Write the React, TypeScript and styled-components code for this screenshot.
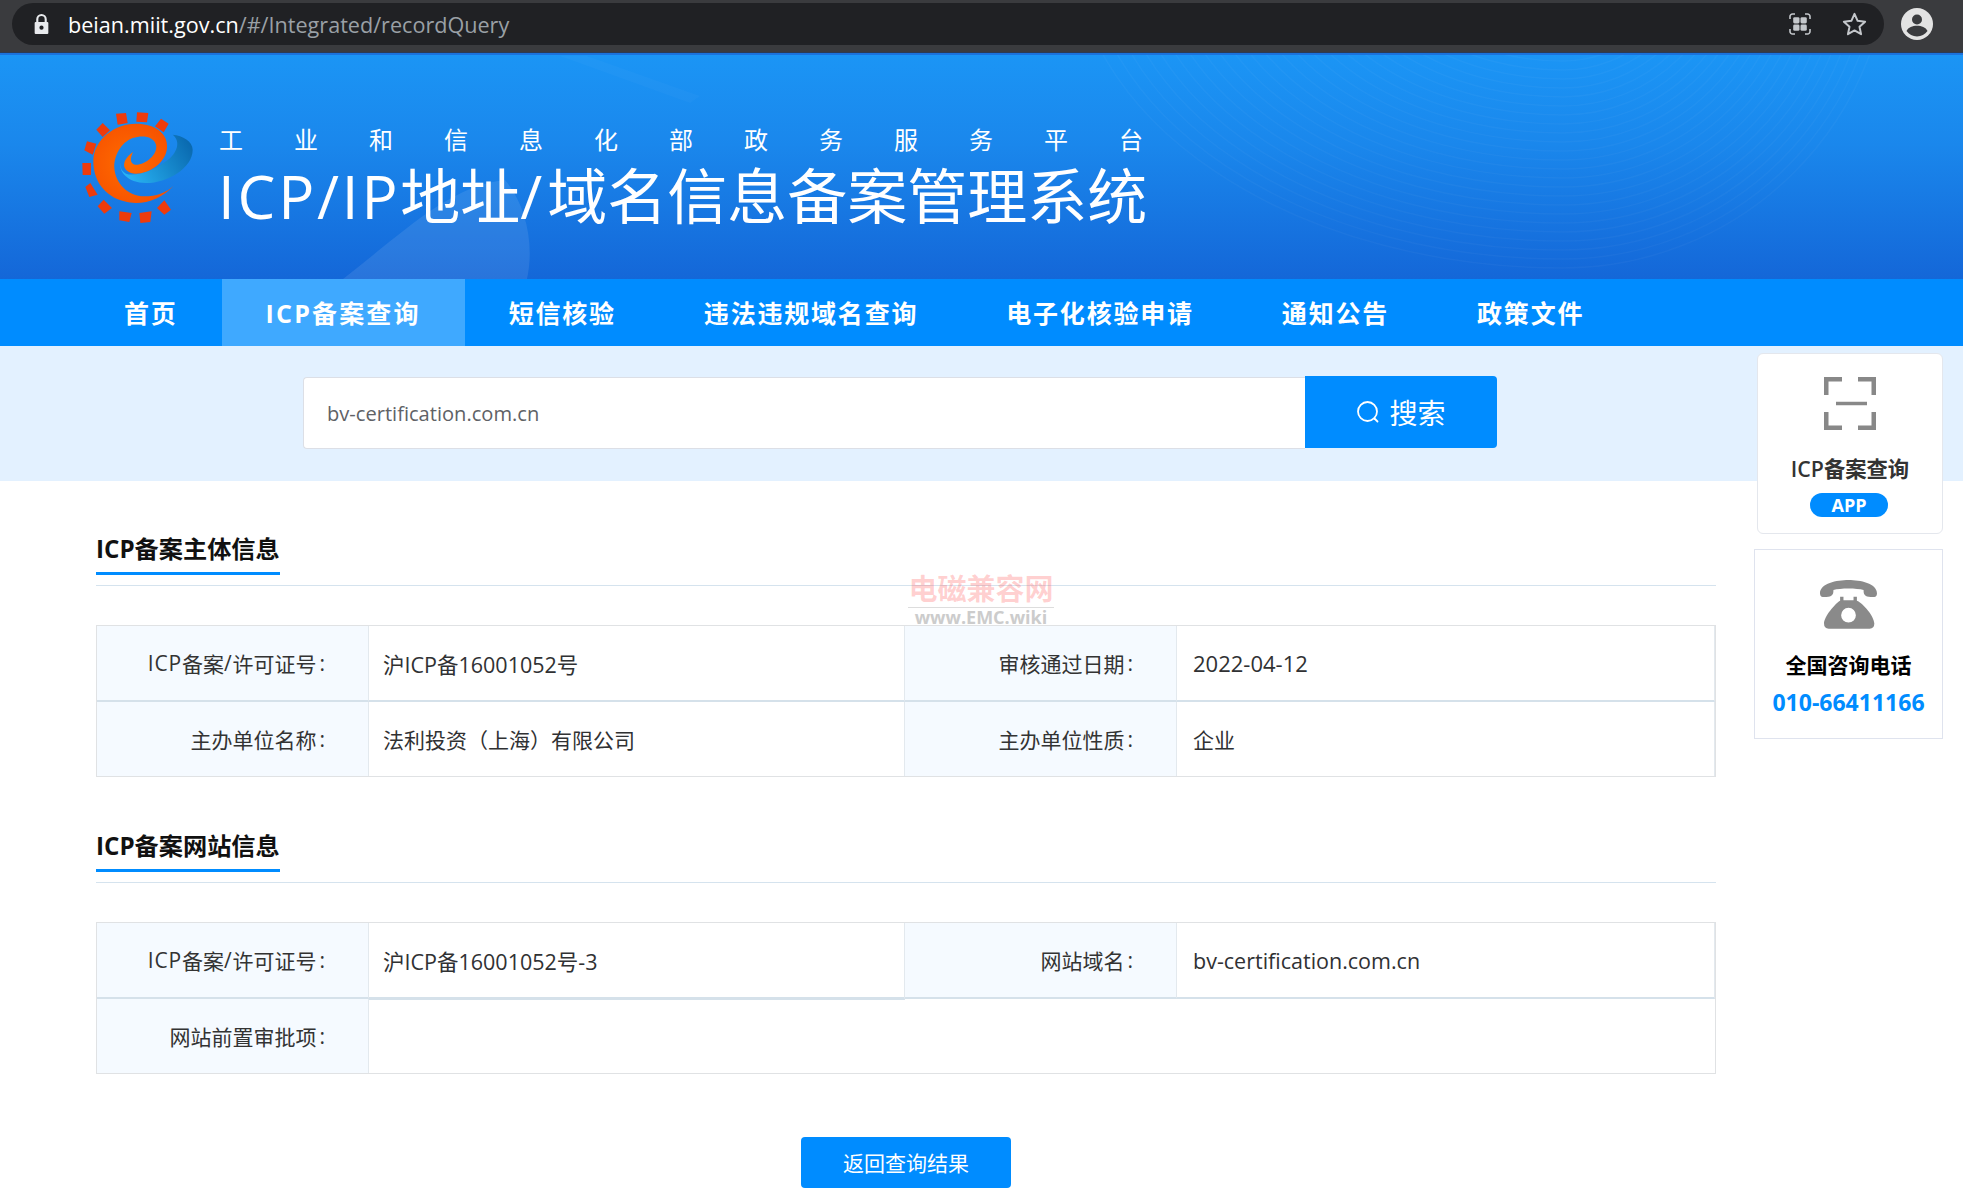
import React from 'react'
import styled, { createGlobalStyle } from 'styled-components'

const GlobalStyle = createGlobalStyle`
  html, body {
    margin: 0;
    padding: 0;
    background: #fff;
  }
  body {
    font-family: "Open Sans", "Noto Sans CJK SC", sans-serif;
    color: #333;
    overflow: hidden;
  }
`

const Page = styled.div`
  position: relative;
  width: 1963px;
  height: 1198px;
  overflow: hidden;
`

/* browser chrome */
const BrowserBar = styled.div`
  height: 53px;
  box-sizing: border-box;
  background: #3a3b3e;
  border-bottom: 1px solid #2b3b55;
  padding: 3px 0 0 12px;
  display: flex;
  align-items: flex-start;
`

const Omnibox = styled.div`
  width: 1872px;
  height: 42px;
  border-radius: 21px;
  background: #202124;
  display: flex;
  align-items: center;
  padding: 0 17px 0 22px;
  box-sizing: border-box;
`

const UrlText = styled.div`
  flex: 1;
  margin-left: 19px;
  font-size: 21.6px;
  color: #fff;
  white-space: nowrap;
  span { color: #9aa0a6; }
`

const BarIcons = styled.div`
  display: flex;
  align-items: center;
  gap: 31px;
`

const Avatar = styled.svg`
  margin: 5px 0 0 17px;
  flex: none;
`

/* banner */
const Banner = styled.header`
  position: relative;
  height: 226px;
  box-sizing: border-box;
  border-top: 2px solid #1b72dc;
  padding: 56px 0 0 81px;
  background: linear-gradient(180deg, #1b95f5 0%, #1a87ec 40%, #1467d8 100%);
  display: flex;
  align-items: flex-start;
  overflow: hidden;
`

const BannerArt = styled.svg`
  position: absolute;
  left: 0;
  top: -2px;
`

const Logo = styled.svg`
  position: relative;
  flex: none;
`

const TitleBlock = styled.div`
  position: relative;
  margin-left: 25px;
  color: #fff;
`

const Subtitle = styled.div`
  display: flex;
  gap: 51px;
  font-size: 24px;
  line-height: 34px;
  margin: 12px 0 0 1px;
`

const Title = styled.h1`
  margin: 3px 0 0;
  font-size: 60px;
  font-weight: 400;
  line-height: 72px;
  white-space: nowrap;
`

/* Latin runs in the reference font sit wider than in Open Sans */
const Wide = styled.span<{ $gap: number }>`
  letter-spacing: ${({ $gap }) => $gap}px;
`

/* nav */
const Nav = styled.nav`
  height: 67px;
  background: #008cff;
  padding-left: 80px;
  display: flex;
`

const NavItem = styled.a<{ $active?: boolean }>`
  padding: 0 44px 2px;
  display: flex;
  align-items: center;
  color: #fff;
  font-size: 25px;
  font-weight: 700;
  letter-spacing: ${({ $active }) => ($active ? '2.16px' : '1.8px')};
  white-space: nowrap;
  background: ${({ $active }) => ($active ? '#3fa9ff' : 'transparent')};
`

/* search */
const SearchBand = styled.div`
  height: 135px;
  box-sizing: border-box;
  background: #e3f1ff;
  padding: 30px 0 0 303px;
  display: flex;
  align-items: flex-start;
`

const SearchInput = styled.div`
  width: 1002px;
  height: 72px;
  margin-top: 1px;
  box-sizing: border-box;
  background: #fff;
  border: 1px solid #dcdfe6;
  border-right: 0;
  border-radius: 4px 0 0 4px;
  padding: 1px 0 0 23px;
  display: flex;
  align-items: center;
  font-size: 20.1px;
  color: #606266;
`

const SearchButton = styled.button`
  width: 192px;
  height: 72px;
  border: 0;
  border-radius: 0 4px 4px 0;
  background: #008cff;
  color: #fff;
  font-family: inherit;
  font-size: 28px;
  display: flex;
  align-items: center;
  justify-content: center;
  gap: 9px;
  padding: 0;
`

/* content */
const Content = styled.main`
  padding: 51px 0 0 96px;
  width: 1620px;
`

const Section = styled.section`
  margin-bottom: 52px;
`

const SectionHead = styled.div`
  border-bottom: 1px solid #d5e3ee;
  padding-bottom: 10px;
  margin-bottom: 39px;
`

const SectionTitle = styled.h2`
  display: inline-block;
  margin: 0;
  vertical-align: top;
  font-size: 24.2px;
  line-height: 32px;
  font-weight: 700;
  color: #111;
  padding: 1px 0 7px;
  border-bottom: 3px solid #008cff;
`

const InfoTable = styled.div`
  display: grid;
  grid-template-columns: 272px 536px 272px 1fr;
  grid-template-rows: 76px 74px;
  box-sizing: border-box;
  border: 1px solid #e0e2e4;
`

const LabelCell = styled.div<{ $last?: boolean }>`
  background: #f5faff;
  border-right: 1px solid #e3e9ee;
  border-bottom: ${({ $last }) => ($last ? '0' : '2px solid #d5e1ea')};
  padding-right: 43px;
  display: flex;
  align-items: center;
  justify-content: flex-end;
  font-size: 21px;
  color: #333;
`

const Colon = styled.span`
  margin-left: 3px;
`

const ValueCell = styled.div<{ $last?: boolean; $span?: number; $size?: number; $thick?: boolean }>`
  grid-column: span ${({ $span }) => $span ?? 1};
  border-right: ${({ $span }) => ($span ? '0' : '1px solid #e3e9ee')};
  border-bottom: ${({ $last, $thick }) => ($last ? '0' : `${$thick ? 3 : 2}px solid #d5e1ea`)};
  margin-bottom: ${({ $thick }) => ($thick ? '-1px' : '0')};
  padding-left: 14px;
  display: flex;
  align-items: center;
  font-size: ${({ $size }) => $size ?? 21}px;
  color: #303133;
  &:nth-child(4n) { padding-left: 16px; }
`

const BackRow = styled.div`
  display: flex;
  justify-content: center;
  margin-top: 63px;
`

const BackButton = styled.button`
  width: 210px;
  height: 51px;
  border: 0;
  border-radius: 4px;
  background: #008cff;
  color: #fff;
  font-family: inherit;
  font-size: 21px;
  padding: 0 0 2px;
`

/* watermark */
const Watermark = styled.div`
  position: absolute;
  left: 908px;
  top: 571px;
  width: 146px;
  text-align: center;
  pointer-events: none;
`

const WatermarkCn = styled.div`
  font-size: 29px;
  line-height: 36px;
  font-weight: 700;
  white-space: nowrap;
  color: rgba(255, 90, 90, 0.28);
  border-bottom: 1px solid #ddd;
`

const WatermarkEn = styled.div`
  font-size: 18px;
  line-height: 20px;
  font-weight: 700;
  color: #ccc;
  white-space: nowrap;
  margin-top: -1px;
`

/* floating side cards */
const AppCard = styled.aside`
  position: absolute;
  left: 1757px;
  top: 353px;
  width: 186px;
  height: 181px;
  box-sizing: border-box;
  background: #fff;
  border: 1px solid #e4e7ed;
  border-radius: 6px;
  display: flex;
  flex-direction: column;
  align-items: center;
  padding-top: 23px;
`

const AppCardTitle = styled.div`
  margin-top: 24px;
  font-size: 21.3px;
  line-height: 30px;
  font-weight: 600;
  color: #333;
  white-space: nowrap;
`

const AppBadge = styled.div`
  margin: 9px 2px 0 0;
  width: 78px;
  height: 24px;
  border-radius: 12px;
  background: #008cff;
  color: #fff;
  font-size: 18px;
  font-weight: 700;
  line-height: 24px;
  text-align: center;
`

const PhoneCard = styled.aside`
  position: absolute;
  left: 1754px;
  top: 549px;
  width: 189px;
  height: 190px;
  box-sizing: border-box;
  background: #fff;
  border: 1px solid #dfe3ee;
  display: flex;
  flex-direction: column;
  align-items: center;
  padding-top: 30px;
`

const PhoneTitle = styled.div`
  margin-top: 21px;
  font-size: 21px;
  line-height: 30px;
  font-weight: 700;
  color: #000;
`

const PhoneNumber = styled.div`
  margin-top: 7px;
  font-size: 23px;
  line-height: 30px;
  font-weight: 700;
  color: #008cff;
`

const navItems = ['首页', 'ICP备案查询', '短信核验', '违法违规域名查询', '电子化核验申请', '通知公告', '政策文件']
const subtitleChars = '工业和信息化部政务服务平台'.split('')

const LockIcon = () => (
  <svg width="15" height="20" viewBox="0 0 14 19">
    <path d="M3 8V5a4 4 0 0 1 8 0v3" fill="none" stroke="#e8eaed" strokeWidth="2" />
    <path fillRule="evenodd" d="M1.5 7.5h11a1 1 0 0 1 1 1V18a1 1 0 0 1-1 1h-11a1 1 0 0 1-1-1V8.500a1 1 0 0 1 1-1zM7 11a2 2 0 1 0 0 4 2 2 0 0 0 0-4z" fill="#e8eaed" />
  </svg>
)

const LensIcon = () => (
  <svg width="22" height="22" viewBox="0 0 22 22" fill="none">
    <path d="M1 6V3.500A2.500 2.500 0 0 1 3.500 1H6M16 1h2.500A2.500 2.500 0 0 1 21 3.500V6M21 16v2.500a2.500 2.500 0 0 1-2.500 2.500H16M6 21H3.500A2.500 2.500 0 0 1 1 18.500V16" stroke="#c4c7cb" strokeWidth="1.600" />
    <rect x="4.200" y="4.200" width="6.300" height="6.300" rx="1.400" fill="#c4c7cb" />
    <rect x="11.500" y="4.200" width="6.300" height="6.300" rx="1.400" fill="#c4c7cb" />
    <rect x="4.200" y="11.500" width="6.300" height="6.300" rx="1.400" fill="#c4c7cb" />
    <rect x="11.500" y="11.500" width="6.300" height="6.300" rx="1.400" fill="#c4c7cb" />
  </svg>
)

const StarIcon = () => (
  <svg width="25" height="25" viewBox="0 0 24 24" fill="none">
    <path d="M12 1.800l3 6.700 7.200.8-5.400 4.900 1.500 7.100-6.300-3.600-6.300 3.600 1.500-7.100-5.400-4.900 7.200-.8z" stroke="#c4c7cb" strokeWidth="1.900" strokeLinejoin="round" />
  </svg>
)

const AvatarIcon = () => (
  <Avatar width="32" height="32" viewBox="0 0 32 32">
    <circle cx="16" cy="16" r="16" fill="#e3e3e3" />
    <circle cx="16" cy="11.500" r="5" fill="#3a3b3e" />
    <path d="M5.500 23c1.800-3.600 6-5.200 10.500-5.200S24.700 19.400 26.500 23c-2.400 3.200-6.200 5.400-10.500 5.400S7.900 26.200 5.500 23z" fill="#3a3b3e" />
  </Avatar>
)

const waveRadii = Array.from({ length: 26 }, (_, i) => 327 - i * 9)

const BannerArtwork = () => (
  <BannerArt width="1963" height="226" viewBox="0 0 1963 226">
    <path d="M343 226 C 400 182, 450 132, 505 127 C 525 150, 535 190, 527 226 Z" fill="#fff" opacity="0.09" />
    <path d="M587 3 L 700 43 L 690 50 L 560 3 Z" fill="#fff" opacity="0.025" />
    <g fill="none" stroke="#fff" strokeOpacity="0.03" strokeWidth="1.500">
      {waveRadii.map((r) => (
        <path key={r} d={`M${1563 + r} -112 A ${r} ${r} 0 0 1 1563 ${-112 + r} A ${r * 1.5} ${r} 0 0 1 ${1563 - r * 1.5} -112`} />
      ))}
    </g>
  </BannerArt>
)

const teeth = [
  '165,42 195,40 200,70 170,75',
  '228,38 262,40 258,68 226,66',
  '300,57 323,72 308,98 282,80',
  '125,70 147,92 125,112 106,90',
  '78,125 106,132 95,165 70,152',
  '64,190 90,190 90,226 65,226',
  '88,250 110,285 85,292 73,262',
  '128,300 153,325 130,342 110,320',
  '175,335 212,340 205,367 175,362',
  '235,340 272,335 268,367 238,370',
  '310,302 330,330 310,345 288,325',
]

const LogoMark = () => (
  <Logo width="112" height="112" viewBox="60 34 336 336">
    <defs>
      <linearGradient id="swoosh" x1="0" y1="0.7" x2="1" y2="0.3">
        <stop offset="0" stopColor="#28b4f5" />
        <stop offset="1" stopColor="#0a6ab0" />
      </linearGradient>
      <radialGradient id="swirl" cx="0.45" cy="0.5" r="0.6">
        <stop offset="0" stopColor="#ff6c00" />
        <stop offset="1" stopColor="#f65000" />
      </radialGradient>
    </defs>
    {teeth.map((points) => (
      <polygon key={points} points={points} fill="#ee3b0c" />
    ))}
    <path d="M180 185 C170 215 200 250 255 250 C320 250 395 205 395 150 C395 125 365 108 335 105 C360 125 350 160 315 185 C280 212 225 232 195 222 C180 215 176 200 180 185Z" fill="url(#swoosh)" />
    <path d="M338 258 C300 300 240 320 190 305 C130 290 95 240 97 180 C100 120 160 72 225 72 C280 72 322 100 318 145 C314 190 265 222 225 222 C200 222 185 205 190 190 C192 178 205 165 216 157 C208 175 205 190 222 195 C250 198 292 165 285 135 C278 110 245 105 215 115 C180 128 158 170 160 205 C163 250 200 290 250 290 C285 290 315 280 338 258Z" fill="url(#swirl)" />
  </Logo>
)

const SearchGlyph = () => (
  <svg width="24" height="24" viewBox="0 0 24 24" fill="none" stroke="#fff" strokeWidth="1.800" strokeLinecap="round">
    <circle cx="11.500" cy="11.500" r="9.500" />
    <path d="M18.500 18.500l3 3" />
  </svg>
)

const ScanIcon = () => (
  <svg width="52" height="53" viewBox="0 0 52 53" fill="none" stroke="#888" strokeWidth="4.500">
    <path d="M18 2.250H2.250V18M34 2.250h15.750V18M18 50.750H2.250V35M34 50.750h15.750V35" />
    <path d="M12 26.500h31" strokeWidth="3.500" />
  </svg>
)

const PhoneIcon = () => (
  <svg width="57" height="49" viewBox="300 720 170 146" fill="#8a8a8a">
    <path d="M300 760C300 730 350 720 385 720C420 720 470 730 470 760C470 772 460 772 445 770C432 768 430 762 430 750C410 744 360 744 340 750C340 762 338 768 325 770C310 772 300 772 300 760Z" />
    <path fillRule="evenodd" d="M360 770h10v10h30v-10h10v12C430 790 462 830 462 850Q462 865 448 865H326Q312 865 312 850C312 830 345 790 360 782ZM385 803a22 22 0 1 0 0 44a22 22 0 1 0 0-44Z" />
  </svg>
)

export default function App() {
  return (
    <Page>
      <GlobalStyle />
      <BrowserBar>
        <Omnibox>
          <LockIcon />
          <UrlText>
            beian.miit.gov.cn<span>/#/Integrated/recordQuery</span>
          </UrlText>
          <BarIcons>
            <LensIcon />
            <StarIcon />
          </BarIcons>
        </Omnibox>
        <AvatarIcon />
      </BrowserBar>

      <Banner>
        <BannerArtwork />
        <LogoMark />
        <TitleBlock>
          <Subtitle>
            {subtitleChars.map((c, i) => (
              <span key={i}>{c}</span>
            ))}
          </Subtitle>
          <Title>
            <Wide $gap={2.8}>ICP/IP</Wide>地址<Wide $gap={5}>/</Wide>域名信息备案管理系统
          </Title>
        </TitleBlock>
      </Banner>

      <Nav>
        {navItems.map((item) => (
          <NavItem key={item} $active={item === 'ICP备案查询'}>
            {item}
          </NavItem>
        ))}
      </Nav>

      <SearchBand>
        <SearchInput>bv-certification.com.cn</SearchInput>
        <SearchButton>
          <SearchGlyph />
          搜索
        </SearchButton>
      </SearchBand>

      <Content>
        <Section>
          <SectionHead>
            <SectionTitle>ICP备案主体信息</SectionTitle>
          </SectionHead>
          <InfoTable>
            <LabelCell><Wide $gap={0.8}>ICP</Wide>备案<Wide $gap={0.8}>/</Wide>许可证号<Colon>:</Colon></LabelCell>
            <ValueCell $size={21.5}>沪ICP备16001052号</ValueCell>
            <LabelCell>审核通过日期<Colon>:</Colon></LabelCell>
            <ValueCell $size={22}>2022-04-12</ValueCell>
            <LabelCell $last>主办单位名称<Colon>:</Colon></LabelCell>
            <ValueCell $last>法利投资（上海）有限公司</ValueCell>
            <LabelCell $last>主办单位性质<Colon>:</Colon></LabelCell>
            <ValueCell $last>企业</ValueCell>
          </InfoTable>
        </Section>

        <section>
          <SectionHead>
            <SectionTitle>ICP备案网站信息</SectionTitle>
          </SectionHead>
          <InfoTable>
            <LabelCell><Wide $gap={0.8}>ICP</Wide>备案<Wide $gap={0.8}>/</Wide>许可证号<Colon>:</Colon></LabelCell>
            <ValueCell $size={21.5} $thick>沪ICP备16001052号-3</ValueCell>
            <LabelCell>网站域名<Colon>:</Colon></LabelCell>
            <ValueCell $size={21.5}>bv-certification.com.cn</ValueCell>
            <LabelCell $last>网站前置审批项<Colon>:</Colon></LabelCell>
            <ValueCell $last $span={3} />
          </InfoTable>
        </section>

        <BackRow>
          <BackButton>返回查询结果</BackButton>
        </BackRow>
      </Content>

      <Watermark>
        <WatermarkCn>电磁兼容网</WatermarkCn>
        <WatermarkEn>www.EMC.wiki</WatermarkEn>
      </Watermark>

      <AppCard>
        <ScanIcon />
        <AppCardTitle>ICP备案查询</AppCardTitle>
        <AppBadge>APP</AppBadge>
      </AppCard>

      <PhoneCard>
        <PhoneIcon />
        <PhoneTitle>全国咨询电话</PhoneTitle>
        <PhoneNumber>010-66411166</PhoneNumber>
      </PhoneCard>
    </Page>
  )
}
